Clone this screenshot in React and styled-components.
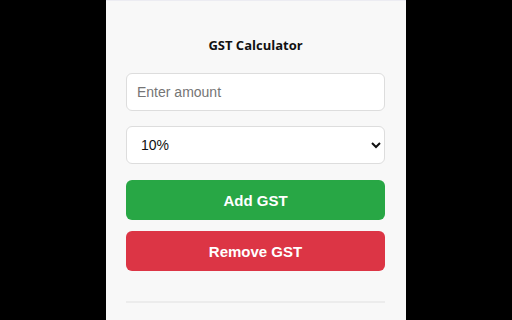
import React from "react";
import styled, { createGlobalStyle } from "styled-components";

const Global = createGlobalStyle`
  html, body { margin: 0; padding: 0; background: #000; height: 100%; }
  #root { height: 100%; }
`;

const Page = styled.div`
  display: flex;
  justify-content: center;
  height: 320px;
  overflow: hidden;
`;

const Panel = styled.div`
  width: 300px;
  box-sizing: border-box;
  background: #f8f8f8;
  border-top: 1px solid #ececf2;
  padding: 35px 21px 0 20px;
  display: flex;
  flex-direction: column;
`;

const Title = styled.h3`
  margin: 0 0 19px;
  font-family: "Open Sans", sans-serif;
  font-weight: 700;
  font-size: 13px;
  line-height: 18px;
  text-align: center;
  color: #111;
`;

const Field = styled.input`
  box-sizing: border-box;
  height: 38px;
  width: 100%;
  padding: 0 10px;
  border: 1px solid #ddd;
  border-radius: 6px;
  background: #fff;
  font-family: "Liberation Sans", Arial, sans-serif;
  font-size: 14px;
  color: #222;
  outline: none;
  &::placeholder { color: #757575; }
`;

const Select = styled.select`
  box-sizing: border-box;
  height: 38px;
  width: 100%;
  margin-top: 15px;
  padding: 0 8px 0 10px;
  border: 1px solid #ddd;
  border-radius: 6px;
  background: #fff;
  font-family: "Liberation Sans", Arial, sans-serif;
  font-size: 14px;
  color: #111;
  outline: none;
`;

const Button = styled.button`
  box-sizing: border-box;
  height: 40px;
  width: 100%;
  margin-top: ${(p) => p.$gap}px;
  border: none;
  border-radius: 6px;
  background: ${(p) => p.$bg};
  color: #fff;
  font-family: "Liberation Sans", Arial, sans-serif;
  font-weight: 700;
  font-size: 15px;
  cursor: pointer;
`;

const Divider = styled.hr`
  margin: 30px 0 0;
  border: none;
  border-top: 2px solid #ececec;
`;

export default function App() {
  return (
    <>
      <Global />
      <Page>
        <Panel>
          <Title>GST Calculator</Title>
          <Field placeholder="Enter amount" />
          <Select defaultValue="10">
            <option value="5">5%</option>
            <option value="10">10%</option>
            <option value="15">15%</option>
          </Select>
          <Button $bg="#28a745" $gap={16}>Add GST</Button>
          <Button $bg="#dc3545" $gap={11}>Remove GST</Button>
          <Divider />
        </Panel>
      </Page>
    </>
  );
}
